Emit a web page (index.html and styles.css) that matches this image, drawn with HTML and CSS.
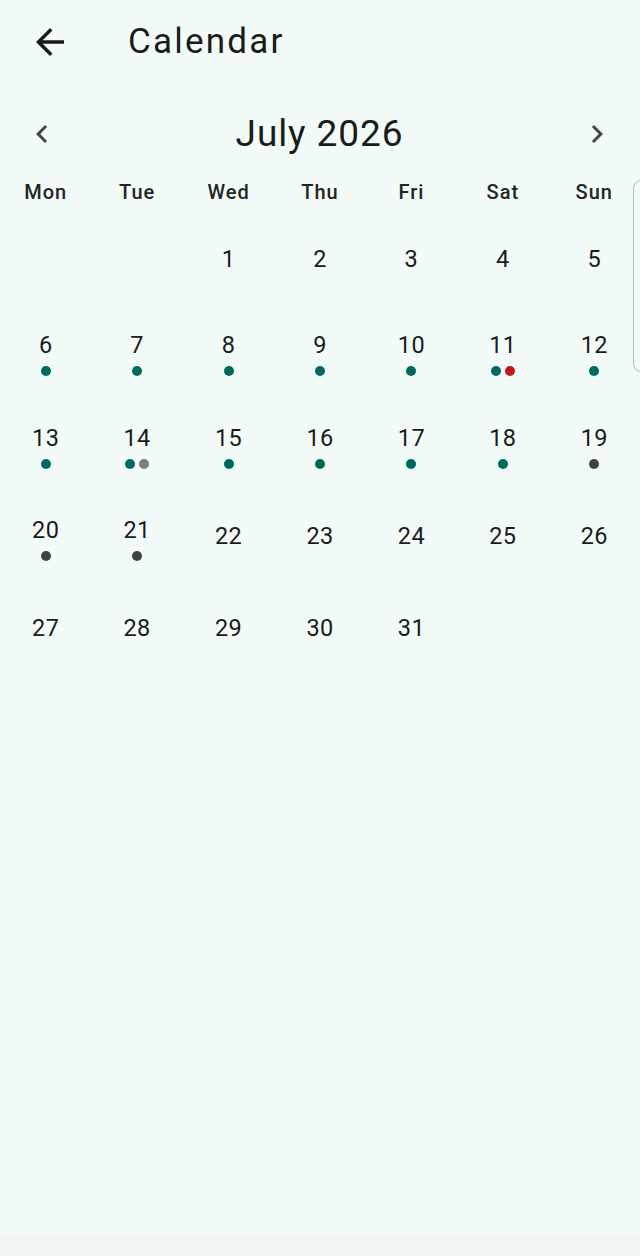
FILE: index.html
```html
<!DOCTYPE html>
<html lang="en">
<head>
<meta charset="utf-8">
<title>Calendar</title>
<link rel="stylesheet" href="styles.css">
</head>
<body>
<div class="screen">
  <header class="appbar">
    <button class="icon-btn back" aria-label="Back">
      <svg viewBox="0 0 24 24" width="42" height="42"><path d="M20 11H7.83l5.59-5.59L12 4l-8 8 8 8 1.41-1.41L7.83 13H20v-2z"/></svg>
    </button>
    <h1 class="title">Calendar</h1>
  </header>

  <div class="month-nav">
    <button class="icon-btn chev" aria-label="Previous month">
      <svg viewBox="0 0 24 24" width="36" height="36"><path d="M15.41 7.41 14 6l-6 6 6 6 1.41-1.41L10.83 12z"/></svg>
    </button>
    <div class="month">July 2026</div>
    <button class="icon-btn chev" aria-label="Next month">
      <svg viewBox="0 0 24 24" width="36" height="36"><path d="M10 6 8.59 7.41 13.17 12l-4.58 4.59L10 18l6-6z"/></svg>
    </button>
  </div>

  <div class="weekdays">
    <span>Mon</span><span>Tue</span><span>Wed</span><span>Thu</span><span>Fri</span><span>Sat</span><span>Sun</span>
  </div>

  <div class="grid">
    <div class="cell"></div>
    <div class="cell"></div>
    <div class="cell"><span class="num">1</span></div>
    <div class="cell"><span class="num">2</span></div>
    <div class="cell"><span class="num">3</span></div>
    <div class="cell"><span class="num">4</span></div>
    <div class="cell"><span class="num">5</span></div>

    <div class="cell"><span class="num">6</span><div class="dots"><i class="dot teal"></i></div></div>
    <div class="cell"><span class="num">7</span><div class="dots"><i class="dot teal"></i></div></div>
    <div class="cell"><span class="num">8</span><div class="dots"><i class="dot teal"></i></div></div>
    <div class="cell"><span class="num">9</span><div class="dots"><i class="dot teal"></i></div></div>
    <div class="cell"><span class="num">10</span><div class="dots"><i class="dot teal"></i></div></div>
    <div class="cell"><span class="num">11</span><div class="dots"><i class="dot teal"></i><i class="dot red"></i></div></div>
    <div class="cell"><span class="num">12</span><div class="dots"><i class="dot teal"></i></div></div>

    <div class="cell"><span class="num">13</span><div class="dots"><i class="dot teal"></i></div></div>
    <div class="cell"><span class="num">14</span><div class="dots"><i class="dot teal"></i><i class="dot grey"></i></div></div>
    <div class="cell"><span class="num">15</span><div class="dots"><i class="dot teal"></i></div></div>
    <div class="cell"><span class="num">16</span><div class="dots"><i class="dot teal"></i></div></div>
    <div class="cell"><span class="num">17</span><div class="dots"><i class="dot teal"></i></div></div>
    <div class="cell"><span class="num">18</span><div class="dots"><i class="dot teal"></i></div></div>
    <div class="cell"><span class="num">19</span><div class="dots"><i class="dot dark"></i></div></div>

    <div class="cell"><span class="num">20</span><div class="dots"><i class="dot dark"></i></div></div>
    <div class="cell"><span class="num">21</span><div class="dots"><i class="dot dark"></i></div></div>
    <div class="cell"><span class="num">22</span></div>
    <div class="cell"><span class="num">23</span></div>
    <div class="cell"><span class="num">24</span></div>
    <div class="cell"><span class="num">25</span></div>
    <div class="cell"><span class="num">26</span></div>

    <div class="cell"><span class="num">27</span></div>
    <div class="cell"><span class="num">28</span></div>
    <div class="cell"><span class="num">29</span></div>
    <div class="cell"><span class="num">30</span></div>
    <div class="cell"><span class="num">31</span></div>
    <div class="cell"></div>
    <div class="cell"></div>
  </div>

  <div class="scroll-thumb"></div>
  <div class="spacer"></div>
  <div class="sysbar"></div>
</div>
</body>
</html>
```

FILE: styles.css
```css
* { box-sizing: border-box; }
html, body {
  margin: 0;
  padding: 0;
  background: #f3fbf8;
}
body {
  font-family: Roboto, "Liberation Sans", sans-serif;
  color: #1a1c1b;
}
.screen {
  position: relative;
  width: 640px;
  height: 1256px;
  display: flex;
  flex-direction: column;
  overflow: hidden;
}
.icon-btn {
  border: 0;
  background: none;
  padding: 0;
  margin: 0;
  display: flex;
  align-items: center;
  justify-content: center;
  cursor: pointer;
}
.icon-btn svg { display: block; }
.appbar {
  height: 84px;
  display: flex;
  align-items: center;
  padding-left: 29px;
}
.back svg { fill: #1a1c1b; }
.title {
  margin: 0 0 0 57px;
  font-size: 35px;
  font-weight: 400;
  letter-spacing: 2.2px;
  line-height: 40px;
}
.month-nav {
  margin-top: 22px;
  height: 56px;
  display: flex;
  align-items: center;
  justify-content: space-between;
  padding: 0 25px 0 24px;
}
.chev svg { fill: #444746; }
.month {
  font-size: 37px;
  font-weight: 400;
  line-height: 44px;
  letter-spacing: 0.9px;
}
.weekdays {
  margin-top: 10px;
  height: 40px;
  display: grid;
  grid-template-columns: repeat(7, 1fr);
  align-items: center;
  text-align: center;
  font-size: 20px;
  font-weight: 500;
  letter-spacing: 1px;
  color: #222524;
}
.grid {
  margin-top: 0;
  display: grid;
  grid-template-columns: repeat(7, 1fr);
  grid-auto-rows: 92.3px;
}
.cell {
  display: flex;
  flex-direction: column;
  align-items: center;
  justify-content: center;
  padding-top: 2px;
}
.num {
  font-size: 23.5px;
  line-height: 38px;
  letter-spacing: 0.4px;
}
.dots {
  margin-top: 2px;
  height: 10px;
  display: flex;
  gap: 4px;
}
.dot {
  width: 10px;
  height: 10px;
  border-radius: 50%;
  display: block;
}
.teal { background: #00695f; }
.red { background: #c4161c; }
.grey { background: #7d7d7d; }
.dark { background: #424242; }
.scroll-thumb {
  position: absolute;
  left: 633px;
  top: 180px;
  width: 16px;
  height: 192px;
  border: 1.5px solid #b4b8b7;
  border-radius: 8px;
}
.spacer { flex: 1; }
.sysbar {
  height: 20px;
  background: #f1f4f4;
}
```
